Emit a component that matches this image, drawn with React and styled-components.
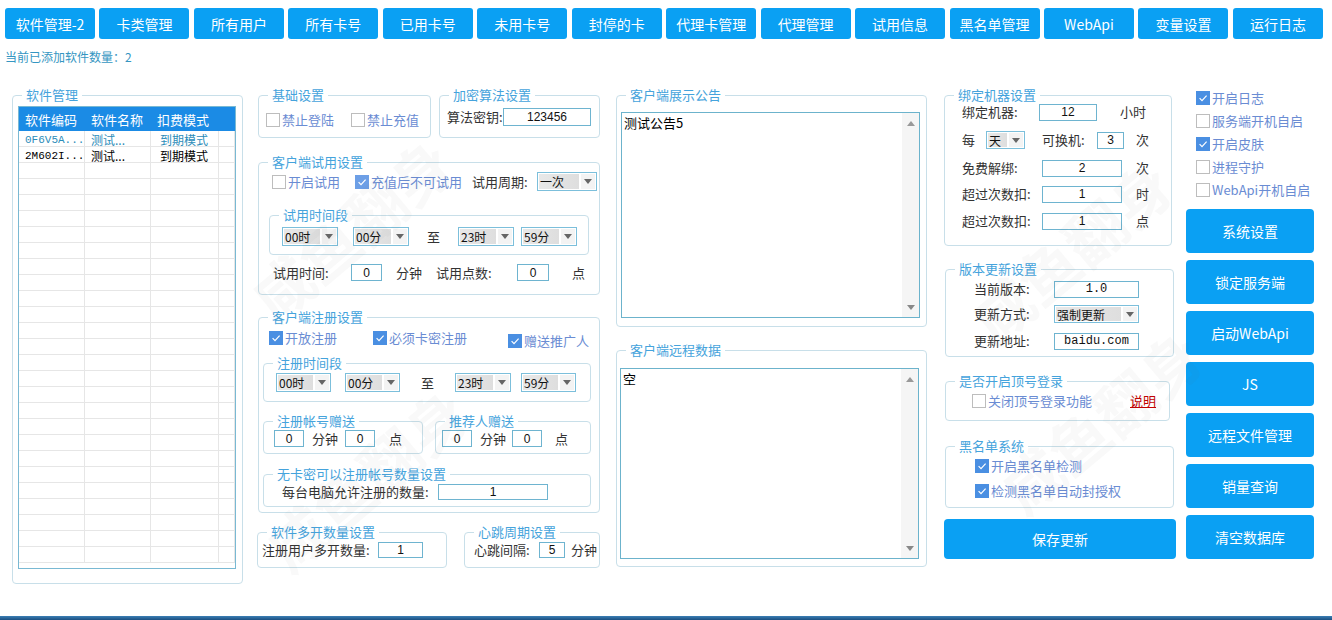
import styled, { createGlobalStyle } from "styled-components";

const GlobalStyle = createGlobalStyle`
  html, body { margin: 0; padding: 0; background: #fff; }
  body {
    font-family: "Noto Sans CJK SC", "Microsoft YaHei", sans-serif;
    font-size: 13px;
    color: #333;
  }
  * { box-sizing: border-box; }
`;

const navItems = [
  "软件管理-2", "卡类管理", "所有用户", "所有卡号", "已用卡号", "未用卡号", "封停的卡",
  "代理卡管理", "代理管理", "试用信息", "黑名单管理", "WebApi", "变量设置", "运行日志",
];

const softwares = [
  { code: "0F6V5A...", name: "测试...", mode: "到期模式", active: true },
  { code: "2M602I...", name: "测试...", mode: "到期模式" },
];

const sideChecks = [
  { text: "开启日志", on: true },
  { text: "服务端开机自启" },
  { text: "开启皮肤", on: true },
  { text: "进程守护" },
  { text: "WebApi开机自启" },
];

const sideButtons = ["系统设置", "锁定服务端", "启动WebApi", "JS", "远程文件管理", "销量查询", "清空数据库"];

function Check({ checked, light, children, $w, $mt }) {
  return (
    <CheckWrap $w={$w} $mt={$mt}>
      <CheckBox $checked={checked} $light={light}>
        {checked && (
          <svg width="10" height="10" viewBox="0 0 10 10">
            <path d="M1.6 5.2 L4 7.6 L8.6 2.6" fill="none" stroke="#fff" strokeWidth="1.2" />
          </svg>
        )}
      </CheckBox>
      <span>{children}</span>
    </CheckWrap>
  );
}

function Select({ value, $w, $h, $ml }) {
  return (
    <SelectBox $w={$w} $h={$h} $ml={$ml}>
      <SelectValue>{value}</SelectValue>
      <SelectArrow>
        <Tri />
      </SelectArrow>
    </SelectBox>
  );
}

function Memo({ text, $h }) {
  return (
    <MemoBox $h={$h}>
      <MemoText>{text}</MemoText>
      <ScrollBar>
        <TriUp />
        <Tri $c="#888" />
      </ScrollBar>
    </MemoBox>
  );
}

function App() {
  const emptyRows = Array.from({ length: 27 - softwares.length });
  return (
    <>
      <GlobalStyle />
      <Page>
        <NavBar>
          {navItems.map((n) => (
            <NavButton key={n}>{n}</NavButton>
          ))}
        </NavBar>
        <Info>当前已添加软件数量：2</Info>

        <Main>
          {/* 软件列表 */}
          <Column $w={231}>
            <Group $h={496}>
              <Legend>软件管理</Legend>
              <Body $p="4px 6px 0 5px">
                <Table>
                  <HeadRow>
                    <HeadCell>软件编码</HeadCell>
                    <HeadCell>软件名称</HeadCell>
                    <HeadCell>扣费模式</HeadCell>
                    <HeadCell />
                  </HeadRow>
                  {softwares.map((s) => (
                    <DataRow key={s.code} $active={s.active}>
                      <Cell $mono>{s.code}</Cell>
                      <Cell>{s.name}</Cell>
                      <Cell $pl={9}>{s.mode}</Cell>
                      <Cell />
                    </DataRow>
                  ))}
                  {emptyRows.map((_, i) => (
                    <DataRow key={i}>
                      <Cell />
                      <Cell />
                      <Cell />
                      <Cell />
                    </DataRow>
                  ))}
                </Table>
              </Body>
            </Group>
          </Column>

          {/* 中间设置 */}
          <Column $w={343} $ml={14}>
            <Pair $gap={8} $pl={1}>
              <Group $w={173} $h={50}>
                <Legend>基础设置</Legend>
                <Body $p="10px 0 0 7px">
                  <Row $h={16}>
                    <Check $w={85}>禁止登陆</Check>
                    <Check>禁止充值</Check>
                  </Row>
                </Body>
              </Group>
              <Group $w={161} $h={50}>
                <Legend>加密算法设置</Legend>
                <Body $p="6px 0 0 7px">
                  <Row>
                    <Label $w={56}>算法密钥:</Label>
                    <TextBox $w={88} $h={18}>123456</TextBox>
                  </Row>
                </Body>
              </Group>
            </Pair>

            <Group $mt={17} $h={140} $ml={1}>
              <Legend>客户端试用设置</Legend>
              <Body $p="3px 10px 0">
                <Row $h={19} $pl={3}>
                  <Check $w={83}>开启试用</Check>
                  <Check $w={117} checked light>充值后不可试用</Check>
                  <Label $w={65}>试用周期:</Label>
                  <Select $w={60} value="一次" />
                </Row>
                <Group $mt={17} $h={47}>
                  <Legend>试用时间段</Legend>
                  <Body $p="5px 12px 0">
                    <Row $h={19}>
                      <Select $w={56} value="00时" />
                      <Select $w={56} $ml={15} value="00分" />
                      <Label $w={49} $align="center">至</Label>
                      <Select $w={56} value="23时" />
                      <Select $w={56} $ml={7} value="59分" />
                    </Row>
                  </Body>
                </Group>
                <Row $mt={9} $h={17} $pl={4}>
                  <Label $w={78}>试用时间:</Label>
                  <TextBox $w={31}>0</TextBox>
                  <Label $w={40} $ml={14}>分钟</Label>
                  <Label $w={81}>试用点数:</Label>
                  <TextBox $w={32}>0</TextBox>
                  <Label $ml={23}>点</Label>
                </Row>
              </Body>
            </Group>

            <Group $mt={15} $h={203} $ml={1}>
              <Legend>客户端注册设置</Legend>
              <Body $p="6px 8px 0 4px">
                <Row $h={19} $pl={6} $align="flex-start">
                  <Check $w={104} checked>开放注册</Check>
                  <Check $w={135} checked>必须卡密注册</Check>
                  <Check checked $mt={3}>赠送推广人</Check>
                </Row>
                <Group $mt={7} $h={46}>
                  <Legend>注册时间段</Legend>
                  <Body $p="3px 12px 0">
                    <Row $h={19}>
                      <Select $w={55} value="00时" />
                      <Select $w={55} $ml={14} value="00分" />
                      <Label $w={55} $align="center">至</Label>
                      <Select $w={56} value="23时" />
                      <Select $w={55} $ml={10} value="59分" />
                    </Row>
                  </Body>
                </Group>
                <Pair $mt={12} $gap={12}>
                  <Group $w={160} $h={40}>
                    <Legend>注册帐号赠送</Legend>
                    <Body $p="2px 0 0 10px">
                      <Row $h={17}>
                        <TextBox $w={30}>0</TextBox>
                        <Label $w={33} $ml={8}>分钟</Label>
                        <TextBox $w={30}>0</TextBox>
                        <Label $ml={14}>点</Label>
                      </Row>
                    </Body>
                  </Group>
                  <Group $w={156} $h={40}>
                    <Legend>推荐人赠送</Legend>
                    <Body $p="2px 0 0 6px">
                      <Row $h={17}>
                        <TextBox $w={30}>0</TextBox>
                        <Label $w={32} $ml={8}>分钟</Label>
                        <TextBox $w={30}>0</TextBox>
                        <Label $ml={13}>点</Label>
                      </Row>
                    </Body>
                  </Group>
                </Pair>
                <Group $mt={13} $h={40}>
                  <Legend>无卡密可以注册帐号数量设置</Legend>
                  <Body $p="3px 0 0 18px">
                    <Row $h={16}>
                      <Label $w={156}>每台电脑允许注册的数量:</Label>
                      <TextBox $w={110} $h={16}>1</TextBox>
                    </Row>
                  </Body>
                </Group>
              </Body>
            </Group>

            <Pair $mt={12} $gap={17}>
              <Group $w={190} $h={43}>
                <Legend>软件多开数量设置</Legend>
                <Body $p="3px 0 0 4px">
                  <Row $h={16}>
                    <Label $w={116}>注册用户多开数量:</Label>
                    <TextBox $w={45} $h={16}>1</TextBox>
                  </Row>
                </Body>
              </Group>
              <Group $w={136} $h={43}>
                <Legend>心跳周期设置</Legend>
                <Body $p="3px 0 0 9px">
                  <Row $h={16}>
                    <Label $w={65}>心跳间隔:</Label>
                    <TextBox $w={26} $h={16}>5</TextBox>
                    <Label $ml={6}>分钟</Label>
                  </Row>
                </Body>
              </Group>
            </Pair>
          </Column>

          {/* 公告 / 远程数据 */}
          <Column $w={311} $ml={16}>
            <Group $h={239}>
              <Legend>客户端展示公告</Legend>
              <Body $p="10px 6px 0 4px">
                <Memo $h={206} text="测试公告5" />
              </Body>
            </Group>
            <Group $mt={16} $h={224}>
              <Legend>客户端远程数据</Legend>
              <Body $p="11px 7px 0 3px">
                <Memo $h={191} text="空" />
              </Body>
            </Group>
          </Column>

          {/* 机器 / 版本 */}
          <Column $w={232} $ml={17}>
            <Group $w={228} $h={158}>
              <Legend>绑定机器设置</Legend>
              <Body $p="1px 0 0 17px">
                <Row>
                  <Label $w={77}>绑定机器:</Label>
                  <TextBox $w={58}>12</TextBox>
                  <Label $ml={23}>小时</Label>
                </Row>
                <Row $mt={10}>
                  <Label $w={24}>每</Label>
                  <Select $w={39} $h={18} value="天" />
                  <Label $w={55} $ml={17}>可换机:</Label>
                  <TextBox $w={27}>3</TextBox>
                  <Label $ml={12}>次</Label>
                </Row>
                <Row $mt={10}>
                  <Label $w={80}>免费解绑:</Label>
                  <TextBox $w={80}>2</TextBox>
                  <Label $ml={14}>次</Label>
                </Row>
                <Row $mt={8}>
                  <Label $w={80}>超过次数扣:</Label>
                  <TextBox $w={80}>1</TextBox>
                  <Label $ml={14}>时</Label>
                </Row>
                <Row $mt={9}>
                  <Label $w={80}>超过次数扣:</Label>
                  <TextBox $w={80}>1</TextBox>
                  <Label $ml={14}>点</Label>
                </Row>
              </Body>
            </Group>

            <Group $mt={16} $w={229} $h={95} $ml={1}>
              <Legend>版本更新设置</Legend>
              <Body $p="4px 0 0 28px">
                <Row>
                  <Label $w={80}>当前版本:</Label>
                  <TextBox $w={85} $mono>1.0</TextBox>
                </Row>
                <Row $mt={7}>
                  <Label $w={80}>更新方式:</Label>
                  <Select $w={85} $h={18} value="强制更新" />
                </Row>
                <Row $mt={9}>
                  <Label $w={80}>更新地址:</Label>
                  <TextBox $w={85} $mono>baidu.com</TextBox>
                </Row>
              </Body>
            </Group>

            <Group $mt={17} $w={225} $h={47} $ml={1}>
              <Legend>是否开启顶号登录</Legend>
              <Body $p="5px 0 0 26px">
                <Row $h={16}>
                  <Check $w={158}>关闭顶号登录功能</Check>
                  <Link>说明</Link>
                </Row>
              </Body>
            </Group>

            <Group $mt={18} $w={229} $h={69} $ml={1}>
              <Legend>黑名单系统</Legend>
              <Body $p="5px 0 0 29px">
                <Row $h={16}>
                  <Check checked>开启黑名单检测</Check>
                </Row>
                <Row $h={16} $mt={9}>
                  <Check checked>检测黑名单自动封授权</Check>
                </Row>
              </Body>
            </Group>

            <SaveButton>保存更新</SaveButton>
          </Column>

          {/* 开关 / 功能按钮 */}
          <Column $w={128} $ml={10}>
            <CheckList>
              {sideChecks.map((c) => (
                <Row key={c.text} $h={23}>
                  <Check checked={c.on}>{c.text}</Check>
                </Row>
              ))}
            </CheckList>
            <ButtonStack>
              {sideButtons.map((b) => (
                <SideButton key={b}>{b}</SideButton>
              ))}
            </ButtonStack>
          </Column>
        </Main>

        <BottomStrip />

        <Watermark $x={350} $y={228}>咸鱼翻身</Watermark>
        <Watermark $x={365} $y={478}>咸鱼翻身</Watermark>
        <Watermark $x={1070} $y={250}>咸鱼翻身</Watermark>
        <Watermark $x={1100} $y={420}>咸鱼翻身</Watermark>
      </Page>
    </>
  );
}

const Page = styled.div`
  position: relative;
  width: 1332px;
  height: 620px;
  overflow: hidden;
  display: flex;
  flex-direction: column;
  background: #fff;
`;

const NavBar = styled.div`
  display: flex;
  justify-content: space-between;
  padding: 8px 9px 0 5px;
`;

const NavButton = styled.button`
  width: 90px;
  height: 31px;
  border: 0;
  border-radius: 3px;
  background: #0aa0f3;
  color: #fff;
  font-family: "Noto Sans CJK SC", "Microsoft YaHei", sans-serif;
  font-size: 14px;
  padding: 0;
`;

const Info = styled.div`
  margin: 11px 0 0 5px;
  height: 14px;
  font-size: 12px;
  line-height: 14px;
  color: #3596c2;
`;

const Main = styled.div`
  display: flex;
  align-items: flex-start;
  margin-top: 24px;
  padding-left: 12px;
`;

const Column = styled.div`
  display: flex;
  flex-direction: column;
  flex-shrink: 0;
  width: ${(p) => p.$w}px;
  margin-left: ${(p) => p.$ml || 0}px;
`;

const Pair = styled.div`
  display: flex;
  gap: ${(p) => p.$gap}px;
  margin-top: ${(p) => p.$mt || 0}px;
  padding-left: ${(p) => p.$pl || 0}px;
`;

const Group = styled.fieldset`
  margin: ${(p) => p.$mt || 0}px 0 0 ${(p) => p.$ml || 0}px;
  padding: 0;
  min-width: 0;
  flex-shrink: 0;
  width: ${(p) => (p.$w ? `${p.$w}px` : "auto")};
  height: ${(p) => p.$h}px;
  border: 1px solid #c8dfe9;
  border-radius: 4px;
`;

const Legend = styled.legend`
  margin-left: 9px;
  padding: 0 4px;
  font-size: 13px;
  line-height: 14px;
  color: #45a3dc;
`;

const Body = styled.div`
  padding: ${(p) => p.$p};
`;

const Row = styled.div`
  display: flex;
  align-items: ${(p) => p.$align || "center"};
  height: ${(p) => p.$h || 18}px;
  margin-top: ${(p) => p.$mt || 0}px;
  padding-left: ${(p) => p.$pl || 0}px;
`;

const Label = styled.span`
  flex-shrink: 0;
  width: ${(p) => (p.$w ? `${p.$w}px` : "auto")};
  margin-left: ${(p) => p.$ml || 0}px;
  text-align: ${(p) => p.$align || "left"};
  font-size: 13px;
  line-height: 16px;
  color: #333;
  white-space: nowrap;
`;

const TextBox = styled.div`
  flex-shrink: 0;
  width: ${(p) => p.$w}px;
  height: ${(p) => p.$h || 17}px;
  border: 1px solid #6eb4d0;
  background: #fff;
  display: flex;
  align-items: center;
  justify-content: center;
  font-family: ${(p) => (p.$mono ? '"Liberation Mono", monospace' : '"Liberation Sans", sans-serif')};
  font-size: 12px;
  color: #111;
`;

const SelectBox = styled.div`
  flex-shrink: 0;
  width: ${(p) => p.$w}px;
  height: ${(p) => p.$h || 19}px;
  margin-left: ${(p) => p.$ml || 0}px;
  border: 1px solid #7cbfdb;
  background: #fff;
  display: flex;
  padding: 1px;
`;

const SelectValue = styled.div`
  flex: 1;
  display: flex;
  align-items: center;
  margin-right: 2px;
  padding-left: 1px;
  background: linear-gradient(to right, #e8e8e8, #dedede);
  font-size: 12px;
  color: #111;
  white-space: nowrap;
`;

const SelectArrow = styled.div`
  width: 14px;
  background: #f3f3f3;
  display: flex;
  align-items: center;
  justify-content: center;
`;

const Tri = styled.span`
  width: 0;
  height: 0;
  border-left: 4px solid transparent;
  border-right: 4px solid transparent;
  border-top: 5px solid ${(p) => p.$c || "#666"};
`;

const TriUp = styled.span`
  width: 0;
  height: 0;
  border-left: 4px solid transparent;
  border-right: 4px solid transparent;
  border-bottom: 5px solid #999;
`;

const CheckWrap = styled.label`
  display: flex;
  align-items: center;
  gap: 2px;
  flex-shrink: 0;
  width: ${(p) => (p.$w ? `${p.$w}px` : "auto")};
  margin-top: ${(p) => p.$mt || 0}px;
  font-size: 13px;
  line-height: 16px;
  color: #6a8cd3;
  white-space: nowrap;
`;

const CheckBox = styled.span`
  width: 14px;
  height: 14px;
  display: flex;
  align-items: center;
  justify-content: center;
  border: 1px solid ${(p) => (p.$checked ? (p.$light ? "#6d9fe6" : "#4a8fe2") : "#bdbdbd")};
  background: ${(p) => (p.$checked ? (p.$light ? "#6d9fe6" : "#4a8fe2") : "#fff")};
`;

const Link = styled.span`
  font-size: 13px;
  line-height: 16px;
  color: #c40000;
  text-decoration: underline;
`;

const Table = styled.div`
  height: 463px;
  border: 1px solid #79b9d3;
  overflow: hidden;
  background: #fff;
`;

const HeadRow = styled.div`
  display: grid;
  grid-template-columns: 66px 66px 68px 1fr;
  height: 24px;
  align-items: center;
  background: #1b8be5;
  color: #fff;
  font-size: 13px;
`;

const HeadCell = styled.div`
  padding-left: 6px;
  white-space: nowrap;
`;

const DataRow = styled.div`
  display: grid;
  grid-template-columns: 66px 66px 68px 1fr;
  height: 16px;
  border-bottom: 1px solid #e6e6e6;
  font-size: 12px;
  color: ${(p) => (p.$active ? "#2b8cb9" : "#000")};
`;

const Cell = styled.div`
  border-right: 1px solid #e6e6e6;
  padding-left: ${(p) => p.$pl || 6}px;
  display: flex;
  align-items: center;
  white-space: nowrap;
  font-family: ${(p) => (p.$mono ? '"Liberation Mono", monospace' : "inherit")};
  font-size: ${(p) => (p.$mono ? "11px" : "12px")};
`;

const MemoBox = styled.div`
  height: ${(p) => p.$h}px;
  border: 1px solid #6cb3cc;
  background: #fff;
  display: flex;
`;

const MemoText = styled.div`
  flex: 1;
  padding: 2px 2px;
  font-size: 13px;
  line-height: 16px;
  color: #000;
`;

const ScrollBar = styled.div`
  width: 17px;
  background: #f5f5f5;
  display: flex;
  flex-direction: column;
  justify-content: space-between;
  align-items: center;
  padding: 8px 0 7px;
`;

const SaveButton = styled.button`
  margin-top: 11px;
  width: 232px;
  height: 40px;
  border: 0;
  border-radius: 4px;
  background: #0aa0f3;
  color: #fff;
  font-family: "Noto Sans CJK SC", "Microsoft YaHei", sans-serif;
  font-size: 14px;
`;

const CheckList = styled.div`
  margin-top: -2px;
  padding-left: 10px;
`;

const ButtonStack = styled.div`
  display: flex;
  flex-direction: column;
  gap: 7px;
  margin-top: 8px;
`;

const SideButton = styled.button`
  width: 128px;
  height: 44px;
  border: 0;
  border-radius: 4px;
  background: #0aa0f3;
  color: #fff;
  font-family: "Noto Sans CJK SC", "Microsoft YaHei", sans-serif;
  font-size: 14px;
  padding: 0;
`;

const BottomStrip = styled.div`
  margin-top: auto;
  height: 4px;
  background: linear-gradient(#3b7fb5, #1b4f80);
`;

const Watermark = styled.div`
  position: absolute;
  left: ${(p) => p.$x}px;
  top: ${(p) => p.$y}px;
  transform: translate(-50%, -50%) rotate(-40deg);
  font-size: 60px;
  font-weight: bold;
  color: rgba(90, 90, 90, 0.04);
  white-space: nowrap;
  pointer-events: none;
`;

export default App;
